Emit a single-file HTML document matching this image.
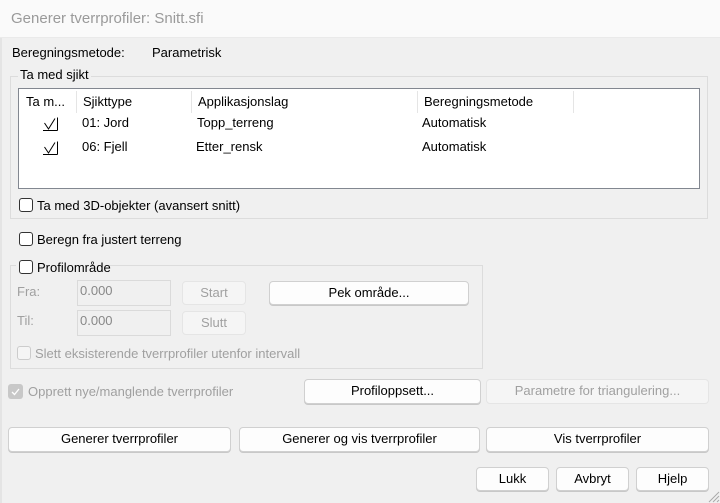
<!DOCTYPE html>
<html><head><meta charset="utf-8"><style>
*{box-sizing:border-box;margin:0;padding:0}
body{width:720px;height:503px;background:#f0f0f0;font-family:"Liberation Sans",sans-serif;font-size:13px;color:#000;position:relative;overflow:hidden}
.a{position:absolute;white-space:nowrap}
.title{left:0;top:0;width:720px;height:38px;background:#fafafa;border-bottom:1px solid #eaeaea}
.grp{position:absolute;border:1px solid #dcdcdc}
.lbl{position:absolute;background:#f0f0f0;padding:0 2px}
.cb{position:absolute;width:14px;height:14px;border:1px solid #333;border-radius:3px;background:#fff}
.btn{position:absolute;background:#fdfdfd;border:1px solid #d0d0d0;border-radius:4px;text-align:center;line-height:22px;box-shadow:0 1px 0 #c8c8c8}
.dis{background:#f5f5f5;color:#a0a0a0;border-color:#e5e5e5;box-shadow:none}
.inp{position:absolute;background:#f0f0f0;border:1px solid #dadada;color:#888;padding:2px 0 0 2px}
.sep{position:absolute;top:91px;width:1px;height:22px;background:#e5e5e5}
.g{color:#a0a0a0}
</style></head><body>
<div class="a title"></div>
<div class="a" style="left:11px;top:10px;font-size:15px;color:#9a9a9a">Generer tverrprofiler: Snitt.sfi</div>
<div class="a" style="left:0;top:38px;width:2px;height:465px;background:#e4e4e4"></div>
<div class="a" style="left:12px;top:45px">Beregningsmetode:</div>
<div class="a" style="left:152px;top:45px">Parametrisk</div>

<div class="grp" style="left:10px;top:76px;width:698px;height:143px"></div>
<div class="lbl a" style="left:18px;top:67px">Ta med sjikt</div>
<div class="a" style="left:18px;top:88px;width:682px;height:101px;background:#fff;border:1px solid #828790"></div>
<div class="sep" style="left:76px"></div><div class="sep" style="left:191px"></div><div class="sep" style="left:417px"></div><div class="sep" style="left:573px"></div>
<div class="a" style="left:26px;top:94px">Ta m...</div>
<div class="a" style="left:83px;top:94px">Sjikttype</div>
<div class="a" style="left:198px;top:94px">Applikasjonslag</div>
<div class="a" style="left:424px;top:94px">Beregningsmetode</div>
<svg class="a" style="left:42px;top:117px" width="18" height="15"><path d="M2.5 6 L6.5 12 L13 1.5 M15.5 0.5 V13.5 M1 13.5 H15.5" fill="none" stroke="#000" stroke-width="1"/></svg>
<svg class="a" style="left:42px;top:141px" width="18" height="15"><path d="M2.5 6 L6.5 12 L13 1.5 M15.5 0.5 V13.5 M1 13.5 H15.5" fill="none" stroke="#000" stroke-width="1"/></svg>
<div class="a" style="left:82px;top:115px">01: Jord</div>
<div class="a" style="left:197px;top:115px">Topp_terreng</div>
<div class="a" style="left:422px;top:115px">Automatisk</div>
<div class="a" style="left:82px;top:139px">06: Fjell</div>
<div class="a" style="left:196px;top:139px">Etter_rensk</div>
<div class="a" style="left:422px;top:139px">Automatisk</div>
<div class="cb" style="left:19px;top:198px"></div>
<div class="a" style="left:37px;top:198px">Ta med 3D-objekter (avansert snitt)</div>

<div class="cb" style="left:19px;top:232px"></div>
<div class="a" style="left:37px;top:232px">Beregn fra justert terreng</div>

<div class="grp" style="left:10px;top:265px;width:473px;height:104px"></div>
<div class="a" style="left:16px;top:258px;width:90px;height:14px;background:#f0f0f0"></div>
<div class="cb" style="left:19px;top:260px"></div>
<div class="a" style="left:37px;top:260px">Profilområde</div>
<div class="a g" style="left:17px;top:284px">Fra:</div>
<div class="inp" style="left:77px;top:280px;width:94px;height:26px">0.000</div>
<div class="btn dis" style="left:182px;top:281px;width:64px;height:24px">Start</div>
<div class="btn" style="left:269px;top:281px;width:200px;height:24px">Pek område...</div>
<div class="a g" style="left:17px;top:313px">Til:</div>
<div class="inp" style="left:77px;top:310px;width:94px;height:26px">0.000</div>
<div class="btn dis" style="left:182px;top:311px;width:64px;height:24px">Slutt</div>
<div class="cb" style="left:17px;top:346px;border-color:#ccc;background:#f5f5f5"></div>
<div class="a g" style="left:35px;top:346px">Slett eksisterende tverrprofiler utenfor intervall</div>

<div class="a" style="left:8px;top:384px;width:15px;height:15px;background:#c8c8c8;border-radius:3px"></div>
<svg class="a" style="left:8px;top:384px" width="15" height="15"><path d="M4 8 L6.5 10.5 L11 5" fill="none" stroke="#fff" stroke-width="1.3"/></svg>
<div class="a g" style="left:28px;top:384px">Opprett nye/manglende tverrprofiler</div>
<div class="btn" style="left:304px;top:379px;width:177px;height:25px">Profiloppsett...</div>
<div class="btn dis" style="left:486px;top:379px;width:223px;height:25px">Parametre for triangulering...</div>

<div class="btn" style="left:8px;top:427px;width:223px;height:25px">Generer tverrprofiler</div>
<div class="btn" style="left:239px;top:427px;width:241px;height:25px">Generer og vis tverrprofiler</div>
<div class="btn" style="left:486px;top:427px;width:223px;height:25px">Vis tverrprofiler</div>

<div class="btn" style="left:476px;top:467px;width:73px;height:24px">Lukk</div>
<div class="btn" style="left:556px;top:467px;width:73px;height:24px">Avbryt</div>
<div class="btn" style="left:636px;top:467px;width:73px;height:24px">Hjelp</div>
<svg class="a" style="left:706px;top:489px" width="14" height="14"><path d="M13 3 L3 13 M13 7 L7 13 M13 11 L11 13" stroke="#aaa" stroke-width="1"/></svg>
</body></html>
